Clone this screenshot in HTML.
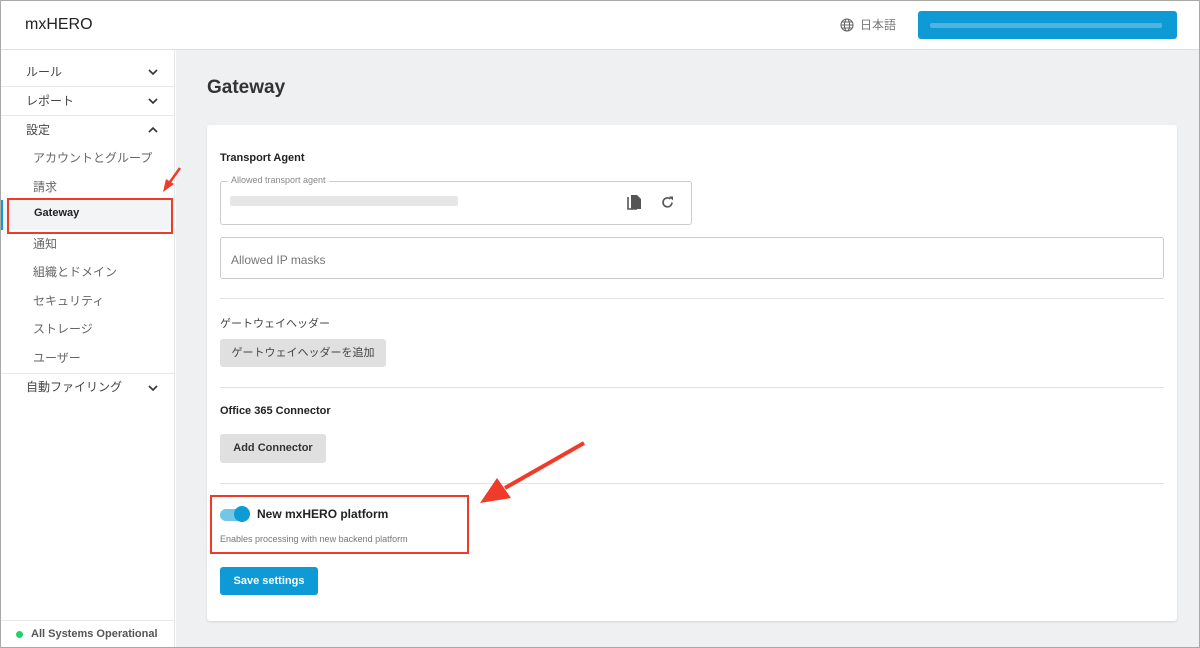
<!DOCTYPE html>
<html><head><meta charset="utf-8"><style>
*{box-sizing:border-box;margin:0;padding:0}
body{width:1200px;height:648px;overflow:hidden;background:#fff;font-family:"Liberation Sans","Noto Sans CJK JP",sans-serif;color:#333;position:relative}
.frame{position:absolute;left:0;top:0;width:1200px;height:648px;border:1px solid #a9a9a9;pointer-events:none;z-index:10}
.hdr{position:absolute;left:0;top:0;width:1200px;height:50px;background:#fff;border-bottom:1px solid #dde0e3}
.logo{position:absolute;left:25px;top:16px;font-size:16px;color:#222}
.lang{position:absolute;left:840px;top:16px;font-size:12px;color:#777}
.ubtn{position:absolute;left:918px;top:11px;width:259px;height:28px;background:#0e9ad5;border-radius:3px}
.ubtn i{position:absolute;left:12px;top:12px;width:232px;height:5px;background:#5fbbe4;border-radius:2px;opacity:.8}
.side{position:absolute;left:0;top:50px;width:175px;height:598px;background:#fff;border-right:1px solid #e4e6e8}
.main{position:absolute;left:176px;top:50px;width:1024px;height:598px;background:#eef0f2}
.it{position:absolute;left:26px;font-size:12px;color:#444}
.sub{position:absolute;left:33px;font-size:12px;color:#666}
.sep{position:absolute;left:0;width:175px;height:1px;background:#e6e8ea}
.chev{position:absolute;left:147px;width:12px;height:12px}
.card{position:absolute;left:207px;top:125px;width:970px;height:496px;background:#fff;border-radius:3px;box-shadow:0 1px 2px rgba(0,0,0,.12)}
.h{position:absolute;font-size:11px;font-weight:bold;color:#222}
.hr{position:absolute;left:220px;width:944px;height:1px;background:#e3e3e3}
.gbtn{position:absolute;background:#e0e0e0;border-radius:3px;font-size:11px;color:#333;text-align:center}
.red{position:absolute;border:2px solid #ee3b2a}
</style></head><body>
<div class="hdr">
<div class="logo">mxHERO</div>
<div class="lang"><svg width="14" height="14" viewBox="0 0 14 14" style="vertical-align:-3px;margin-right:6px" fill="none" stroke="#666" stroke-width="1.1"><circle cx="7" cy="7" r="6"/><ellipse cx="7" cy="7" rx="2.6" ry="6"/><path d="M1 7h12M2 4h10M2 10h10"/></svg>日本語</div>
<div class="ubtn"><i></i></div>
</div>
<div class="side">
<div class="it" style="top:13px">ルール</div>
<svg class="chev" style="top:16px" viewBox="0 0 12 12"><path d="M2 4l4 4 4-4" fill="none" stroke="#333" stroke-width="1.6"/></svg>
<div class="sep" style="top:36px"></div>
<div class="it" style="top:42px">レポート</div>
<svg class="chev" style="top:45px" viewBox="0 0 12 12"><path d="M2 4l4 4 4-4" fill="none" stroke="#333" stroke-width="1.6"/></svg>
<div class="sep" style="top:65px"></div>
<div class="it" style="top:71px">設定</div>
<svg class="chev" style="top:74px" viewBox="0 0 12 12"><path d="M2 8l4-4 4 4" fill="none" stroke="#333" stroke-width="1.6"/></svg>
<div class="sub" style="top:99px">アカウントとグループ</div>
<div class="sub" style="top:128px">請求</div>
<div style="position:absolute;left:0;top:150px;width:175px;height:30px;background:#f3f4f5"></div>
<div style="position:absolute;left:0;top:150px;width:3px;height:30px;background:#0e9ad5"></div>
<div class="sub" style="top:157px;left:34px;font-weight:bold;color:#222;font-size:11px">Gateway</div>
<div class="sub" style="top:185px">通知</div>
<div class="sub" style="top:213px">組織とドメイン</div>
<div class="sub" style="top:242px">セキュリティ</div>
<div class="sub" style="top:270px">ストレージ</div>
<div class="sub" style="top:299px">ユーザー</div>
<div class="sep" style="top:323px"></div>
<div class="it" style="top:328px">自動ファイリング</div>
<svg class="chev" style="top:332px" viewBox="0 0 12 12"><path d="M2 4l4 4 4-4" fill="none" stroke="#333" stroke-width="1.6"/></svg>
<div class="sep" style="top:570px"></div>
<div style="position:absolute;left:16px;top:581px;width:7px;height:7px;border-radius:50%;background:#1fd36a"></div>
<div style="position:absolute;left:31px;top:578px;font-size:11px;font-weight:bold;color:#555">All Systems Operational</div>
</div>
<div class="main"></div>
<div style="position:absolute;left:207px;top:77px;font-size:19px;font-weight:bold;color:#333">Gateway</div>
<div class="card"></div>
<div class="h" style="left:220px;top:152px">Transport Agent</div>
<div style="position:absolute;left:220px;top:181px;width:472px;height:44px;border:1px solid #ccc;border-radius:3px"></div>
<div style="position:absolute;left:228px;top:175px;padding:0 3px;background:#fff;font-size:9px;color:#888">Allowed transport agent</div>
<div style="position:absolute;left:230px;top:196px;width:228px;height:10px;background:#e6e6e6;border-radius:2px"></div>
<svg style="position:absolute;left:626px;top:194px" width="16" height="17" viewBox="0 0 16 17"><path d="M2 3v12h9" fill="none" stroke="#555" stroke-width="1.6"/><path d="M5 1h6l4 4v10H5z" fill="#555"/></svg>
<svg style="position:absolute;left:660px;top:195px" width="15" height="15" viewBox="0 0 15 15"><path d="M12 7.5A4.5 4.5 0 1 1 10.5 4" fill="none" stroke="#555" stroke-width="1.6"/><path d="M9 1.5h4v4z" fill="#555"/></svg>
<div style="position:absolute;left:220px;top:237px;width:944px;height:42px;border:1px solid #ccc;border-radius:3px"></div>
<div style="position:absolute;left:231px;top:253px;font-size:12px;color:#777">Allowed IP masks</div>
<div class="hr" style="top:298px"></div>
<div style="position:absolute;left:220px;top:315px;font-size:11px;color:#444">ゲートウェイヘッダー</div>
<div class="gbtn" style="left:220px;top:339px;width:166px;height:28px;line-height:28px;color:#444">ゲートウェイヘッダーを追加</div>
<div class="hr" style="top:387px"></div>
<div class="h" style="left:220px;top:405px">Office 365 Connector</div>
<div class="gbtn" style="left:220px;top:434px;width:106px;height:29px;line-height:29px;font-weight:bold">Add Connector</div>
<div class="hr" style="top:483px"></div>
<div style="position:absolute;left:220px;top:509px;width:26px;height:12px;border-radius:6px;background:#72c6e6"></div>
<div style="position:absolute;left:234px;top:506px;width:16px;height:16px;border-radius:50%;background:#0e9ad5"></div>
<div style="position:absolute;left:257px;top:507px;font-size:12px;font-weight:bold;color:#222">New mxHERO platform</div>
<div style="position:absolute;left:220px;top:534px;font-size:9px;color:#777">Enables processing with new backend platform</div>
<div style="position:absolute;left:220px;top:567px;width:98px;height:28px;background:#0e9ad5;border-radius:3px;color:#fff;font-size:11px;font-weight:bold;text-align:center;line-height:28px">Save settings</div>
<div class="red" style="left:7px;top:198px;width:166px;height:36px"></div>
<div class="red" style="left:210px;top:495px;width:259px;height:59px"></div>
<svg style="position:absolute;left:0;top:0" width="1200" height="648" viewBox="0 0 1200 648">
<path d="M180 168L170 182" stroke="#ee3b2a" stroke-width="2.5"/><path d="M163 192l3-13 8 5z" fill="#ee3b2a"/>
<path d="M584 443L505 488" stroke="#ee3b2a" stroke-width="4"/><path d="M480 503l17-25 14 20z" fill="#ee3b2a"/>
</svg>
<div class="frame"></div>
</body></html>
